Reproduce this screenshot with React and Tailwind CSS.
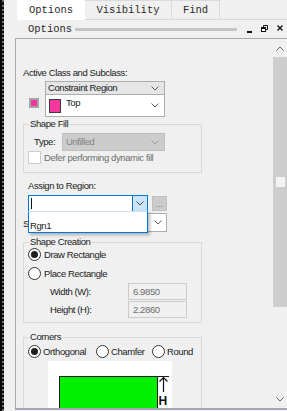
import React from "react";

function Chevron({ color = "#5f5f5f", up = false }) {
  return (
    <svg width="8" height="5" viewBox="0 0 8 5" className="shrink-0">
      <path
        d={up ? "M0.5 4.5 L4 1 L7.5 4.5" : "M0.5 0.5 L4 4 L7.5 0.5"}
        fill="none"
        stroke={color}
        strokeWidth="1"
      />
    </svg>
  );
}

function Radio({ checked }) {
  return (
    <span className="w-[13px] h-[13px] rounded-full border border-[#333333] bg-white flex items-center justify-center shrink-0">
      {checked && <span className="w-[7px] h-[7px] rounded-full bg-[#1f1f1f]" />}
    </span>
  );
}

function Group({ label, className = "", children }) {
  return (
    <fieldset className={"m-0 px-0 w-[179px] border border-[#d9d9d9] " + className}>
      <legend className="ml-[5px] px-[1px] leading-[12px] text-[#1a1a1a]">{label}</legend>
      {children}
    </fieldset>
  );
}

function Scrollbar() {
  return (
    <div className="w-[14px] shrink-0 flex flex-col bg-[#f0f0f0]">
      <div className="h-[18px] flex items-center justify-center">
        <Chevron up color="#606060" />
      </div>
      <div className="h-[250px] bg-[#cdcdcd] flex flex-col pt-[120px] pl-[3px]">
        <div className="w-[9px] h-[10px] bg-[#f4f4f4]" />
      </div>
      <div className="flex-1" />
      <div className="h-[17px] flex items-center justify-center">
        <Chevron color="#606060" />
      </div>
    </div>
  );
}

export default function App() {
  return (
    <div className="w-[287px] h-[411px] bg-[#f0f0f0] flex overflow-hidden font-['Liberation_Sans',Arial,sans-serif] text-[9.5px] leading-[12px] tracking-[-0.4px] text-[#1a1a1a]">
      {/* left dark strip */}
      <div className="w-[4px] h-full shrink-0 bg-[#0a0a0a] border-r-2 border-dotted border-[#6a6a6a]" />
      <div className="w-[11px] shrink-0" />

      <div className="flex-1 min-w-0 flex flex-col pb-[1px]">
        {/* tabs */}
        <div className="h-[20px] shrink-0 flex pl-[2px] border-b border-[#d9d9d9] font-['Liberation_Mono',monospace] text-[10.5px] tracking-normal text-[#2a2a2a]">
          <div className="w-[68px] h-[20px] bg-white flex items-center justify-center">Options</div>
          <div className="w-[87px] h-[19px] border-r border-t border-[#dadada] flex items-center justify-center">
            Visibility
          </div>
          <div className="w-[48px] h-[19px] border-r border-t border-[#dadada] flex items-center justify-center">
            Find
          </div>
        </div>

        {/* panel header */}
        <div className="h-[18px] shrink-0 flex items-center font-['Liberation_Mono',monospace] text-[10.5px] tracking-normal text-[#2a2a2a]">
          <span className="ml-[13px]">Options</span>
          <div className="ml-[3px] w-[162px] h-[3px] bg-[#c6c6c6]" />
          <div className="ml-[10px] mt-[5px] w-[5px] h-[2px] bg-[#111111]" />
          <svg width="7" height="7" viewBox="0 0 7 7" className="ml-[9px] mb-[2px]">
            <path d="M2.5 2 V0.5 H6.5 V4.5 H5" fill="none" stroke="#111" strokeWidth="1" />
            <rect x="0.5" y="2.5" width="4" height="4" fill="#fff" stroke="#111" strokeWidth="1" />
            <rect x="0" y="2" width="5" height="2" fill="#111" />
          </svg>
          <svg width="6" height="6" viewBox="0 0 6 6" className="ml-[9px] mb-[2px]">
            <path d="M0.5 0.5 L5.5 5.5 M5.5 0.5 L0.5 5.5" stroke="#111" strokeWidth="1.3" />
          </svg>
        </div>

        {/* content box */}
        <div className="flex-1 min-h-0 flex border-l border-t border-[#a9a9a9] border-b-2 border-b-[#a2a6b4]">
          <div className="flex-1 min-w-0 overflow-hidden flex flex-col pl-[7px]">
            <div className="mt-[28px]">Active Class and Subclass:</div>

            {/* class combo */}
            <div className="mt-[2px] ml-[22px] w-[120px] h-[17px] border border-[#adadad] bg-[#e5e5e5] flex items-center justify-between pl-[2px] pr-[5px]">
              <span>Constraint Region</span>
              <Chevron />
            </div>

            {/* subclass row */}
            <div className="flex h-[22px]">
              <div className="ml-[6px] mt-[3px] w-[10px] h-[10px] border-2 border-[#a3a3a3] bg-[#f4379c]" />
              <div className="ml-[6px] w-[120px] h-[22px] border-x border-b border-[#adadad] bg-white flex items-center pl-[3px] pr-[5px]">
                <div className="w-[12px] h-[14px] border border-[#3a3a3a] bg-[#f4379c]" />
                <span className="ml-[5px] self-start mt-[2px]">Top</span>
                <span className="flex-1" />
                <Chevron />
              </div>
            </div>

            {/* Shape Fill */}
            <Group label="Shape Fill" className="mt-[1px] pt-[2px] pb-[8px]">
              <div className="mt-[1px] flex items-center h-[18px]">
                <span className="ml-[10px] w-[28px]">Type:</span>
                <div className="w-[103px] h-[18px] border border-[#bfbfbf] bg-[#cccccc] flex items-center justify-between pl-[3px] pr-[5px] text-[#838383]">
                  <span>Unfilled</span>
                  <Chevron color="#9a9a9a" />
                </div>
              </div>
              <div className="flex items-center h-[13px]">
                <span className="ml-[4px] w-[13px] h-[13px] border border-[#cccccc] bg-white" />
                <span className="ml-[3px] text-[#6d6d6d]">Defer performing dynamic fill</span>
              </div>
            </Group>

            <div className="mt-[7px] ml-[5px]">Assign to Region:</div>

            {/* editable combo with open list */}
            <div className="mt-[3px] flex items-center h-[17px] ml-[5px]">
              <div className="relative w-[120px] h-[17px] border border-[#0078d7] bg-white flex">
                <span className="ml-[2px] mt-[2px] w-[1px] h-[11px] bg-[#111111]" />
                <span className="flex-1" />
                <div className="w-[15px] h-full border-l border-[#0078d7] bg-[#cce4f7] flex items-center justify-center">
                  <Chevron color="#4a4a4a" />
                </div>
                <div className="absolute left-[-1px] top-full w-[120px] h-[22px] z-10 bg-white border-x border-b border-[#0078d7] border-t border-t-[#cfe2f3] shadow-[2px_2px_3px_rgba(0,0,0,0.28)] flex flex-col justify-end pl-[1px]">
                  <span>Rgn1</span>
                </div>
              </div>
              <div className="ml-[4px] w-[15px] h-[15px] border border-[#bfbfbf] bg-[#cccccc] flex items-center justify-center text-[#838383] leading-[8px] tracking-normal">
                ...
              </div>
            </div>

            {/* row hidden beneath the list */}
            <div className="mt-[1px] h-[19px] flex items-center">
              <span className="w-[22px] mt-[2px]">S</span>
              <div className="w-[122px] h-[19px] border border-[#adadad] bg-white flex items-center justify-end pr-[4px]">
                <Chevron />
              </div>
            </div>

            {/* Shape Creation */}
            <Group label="Shape Creation" className="mt-[4px] pb-[4px]">
              <label className="flex items-center h-[13px]">
                <span className="ml-[4px]">
                  <Radio checked />
                </span>
                <span className="ml-[3px]">Draw Rectangle</span>
              </label>
              <label className="mt-[6px] flex items-center h-[13px]">
                <span className="ml-[4px]">
                  <Radio />
                </span>
                <span className="ml-[3px]">Place Rectangle</span>
              </label>
              <div className="mt-[3px] flex items-center h-[17px]">
                <span className="ml-[26px] w-[78px]">Width (W):</span>
                <div className="w-[59px] h-[17px] border border-[#cccccc] bg-[#f0f0f0] flex items-center pl-[4px] text-[#6d6d6d]">
                  6.9850
                </div>
              </div>
              <div className="mt-[1px] flex items-center h-[17px]">
                <span className="ml-[26px] w-[78px]">Height (H):</span>
                <div className="w-[59px] h-[17px] border border-[#cccccc] bg-[#f0f0f0] flex items-center pl-[4px] text-[#6d6d6d]">
                  2.2860
                </div>
              </div>
            </Group>

            {/* Corners */}
            <Group label="Corners" className="mt-[8px] pt-[2px] pb-[8px] shrink-0">
              <div className="flex items-center h-[13px]">
                <label className="ml-[4px] w-[68px] flex items-center">
                  <Radio checked />
                  <span className="ml-[2px]">Orthogonal</span>
                </label>
                <label className="w-[56px] flex items-center">
                  <Radio />
                  <span className="ml-[2px]">Chamfer</span>
                </label>
                <label className="flex items-center">
                  <Radio />
                  <span className="ml-[2px]">Round</span>
                </label>
              </div>
              <div className="mt-[3px] ml-[24px] w-[124px] h-[60px] bg-white">
                <svg width="124" height="60" viewBox="0 0 124 60">
                  <rect x="11.5" y="15.5" width="98" height="50" fill="#00f000" stroke="#1a1a1a" strokeWidth="1" />
                  <path d="M109 15.5 H121" stroke="#1a1a1a" strokeWidth="1" />
                  <path d="M115.5 16 V31 M111.5 20.5 L115.5 16.5 L119.5 20.5" fill="none" stroke="#111" strokeWidth="1.2" />
                  <text x="110.5" y="44" fontFamily="Liberation Sans, Arial, sans-serif" fontWeight="bold" fontSize="12" fill="#111">
                    H
                  </text>
                </svg>
              </div>
            </Group>
          </div>
          <Scrollbar />
        </div>
      </div>
    </div>
  );
}
